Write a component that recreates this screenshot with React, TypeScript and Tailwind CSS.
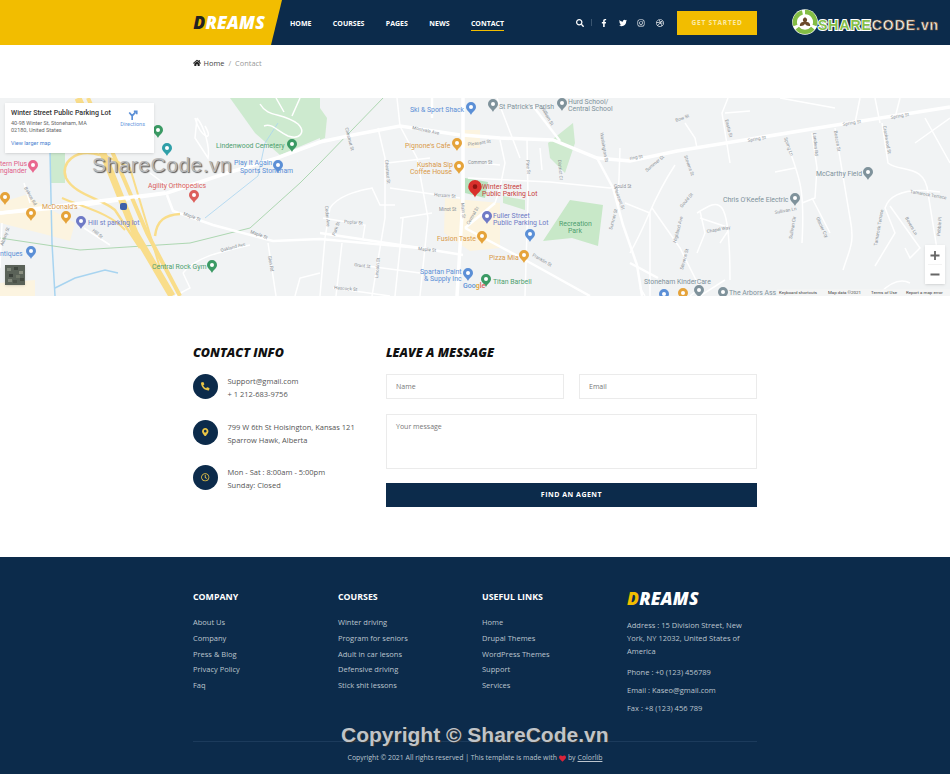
import { FaHome, FaSearch, FaFacebookF, FaTwitter, FaInstagram, FaDribbble, FaPhoneAlt, FaMapMarkerAlt, FaRegClock, FaHeart } from "react-icons/fa";

const navItems = ["HOME", "COURSES", "PAGES", "NEWS", "CONTACT"];

const footerCols = [
  { title: "COMPANY", links: ["About Us", "Company", "Press & Blog", "Privacy Policy", "Faq"] },
  { title: "COURSES", links: ["Winter driving", "Program for seniors", "Adult in car lesons", "Defensive driving", "Stick shit lessons"] },
  { title: "USEFUL LINKS", links: ["Home", "Drupal Themes", "WordPress Themes", "Support", "Services"] },
];

const contactRows = [
  { icon: <FaPhoneAlt />, lines: ["Support@gmail.com", "+ 1 212-683-9756"] },
  { icon: <FaMapMarkerAlt />, lines: ["799 W 6th St Hoisington, Kansas 121", "Sparrow Hawk, Alberta"] },
  { icon: <FaRegClock />, lines: ["Mon - Sat : 8:00am - 5:00pm", "Sunday: Closed"] },
];

const roadsWide = [
  "M0 115 L77 108 L167 95 L227 75 L277 60 L320 44 L353 37 L400 28 L460 37",
  "M463 37 L500 40 L553 42 L597 60 L630 63 L677 53 L830 28 L950 9",
  "M463 0 L463 100 L457 198",
];

const roadsMid = [
  "M167 97 L173 113 L213 127 L273 143 L320 141 L420 150 L463 157",
  "M465 130 L527 163 L590 198",
  "M597 60 L613 90 L623 127 L637 167 L642 198",
  "M533 8 L560 43",
  "M320 135 L420 150",
  "M495 105 L465 130",
  "M432 0 L432 20",
  "M630 165 L658 180",
];

const roadsThin = [
  "M197 20 C205 30 210 50 208 60 L195 40 L197 20",
  "M150 75 L170 90",
  "M24 85 L30 105 M2 125 L0 170 M84 130 L110 147",
  "M183 175 C195 160 215 155 250 147 M183 175 L190 190 L175 198",
  "M268 145 L276 198 M295 198 L300 180 L320 175",
  "M397 0 L400 28 L417 60 L428 120 L420 198",
  "M378 30 L385 60 L385 120 L372 198",
  "M387 65 L430 60 M390 90 L460 100 M336 198 L342 145",
  "M320 198 L325 140 L330 110 C340 95 365 92 372 90 L380 107 L395 107",
  "M323 120 L365 127 L363 140 M400 120 L432 115 M403 120 L400 150 L395 198",
  "M480 65 L500 67 M500 42 L505 65 L500 90 L495 105",
  "M468 80 L550 84 L610 90 L630 87",
  "M527 42 L528 100 L525 198",
  "M620 50 L618 110",
  "M360 167 L420 175 M333 190 L390 198",
  "M497 0 L520 60 M540 50 L542 72",
  "M650 198 L650 115 L625 105 M652 110 L680 150 L700 190 L690 198",
  "M630 155 C650 120 650 105 675 67",
  "M700 113 L705 135 L697 155 M700 120 L730 130 L720 145",
  "M697 115 C720 100 730 95 730 182 M725 182 L700 198",
  "M728 0 L722 15 L730 65",
  "M685 25 L695 40 L697 50 M725 15 L750 13",
  "M785 40 C800 80 805 90 802 145 M802 105 L815 100 L817 70 L812 35",
  "M812 100 L830 135 M775 74 L795 70",
  "M835 30 L850 120 C855 145 850 150 843 172",
  "M882 25 L888 65 C900 75 925 65 928 95 L940 170",
  "M940 94 C910 90 890 95 885 110 L895 135 L875 168 M890 108 L920 150 L910 160 L905 150",
  "M925 20 L950 65 M915 45 L950 20",
  "M860 0 L855 25 M875 0 L880 25 M900 0 L895 20",
  "M780 0 L835 10",
  "M640 190 L645 198 M880 195 C890 185 900 180 910 185",
  "M260 6 C268 20 282 14 298 26 C306 34 300 42 288 38 C276 32 272 25 264 28 M276 0 L284 14 M300 0 L292 18",
  "M195 20 C200 40 215 45 205 28",
];

const pins = [
  [292, 47, "#3b9a64"], [278, 68, "#5b8fd6"], [194, 98, "#dc5f5b"], [33, 68, "#e9688f"],
  [66, 119, "#e5a33a"], [31, 116, "#e5a33a"], [5, 100, "#e5a33a"], [81, 124, "#6f7ac6"],
  [31, 154, "#5b8fd6"], [212, 168, "#3b9a64"], [158, 33, "#3b9a64"], [167, 51, "#2f9fa8"],
  [471, 10, "#5b8fd6"], [493, 7, "#7f929b"], [562, 6, "#7f929b"], [457, 46, "#e5a33a"],
  [459, 69, "#e5a33a"], [487, 119, "#6f7ac6"], [482, 139, "#e5a33a"], [524, 158, "#e5a33a"],
  [468, 176, "#5b8fd6"], [486, 182, "#3b9a64"], [530, 137, "#5b8fd6"], [868, 75, "#7f929b"],
  [795, 101, "#7f929b"], [699, 193, "#7f929b"], [723, 195, "#7f929b"], [683, 196, "#e5a33a"],
  [664, 197, "#5b8fd6"],
] as const;

const mapLabels: [number, number, string, string][] = [
  [216, 50, "Lindenwood Cemetery", "#4f9f70"],
  [234, 67, "Play It Again", "#5b8fd6"],
  [240, 75, "Sports Stoneham", "#5b8fd6"],
  [148, 90, "Agility Orthopedics", "#d9605c"],
  [0, 68, "tern Plus", "#e0608a"],
  [0, 75, "nglander", "#e0608a"],
  [42, 111, "McDonald's", "#d99a4a"],
  [88, 127, "Hill st parking lot", "#6f7ac6"],
  [0, 158, "ntiques", "#5b8fd6"],
  [152, 171, "Central Rock Gym", "#4f9f70"],
  [410, 14, "Ski & Sport Shack", "#5b8fd6"],
  [499, 11, "St Patrick's Parish", "#7f929b"],
  [568, 6, "Hurd School/", "#7f929b"],
  [568, 13, "Central School", "#7f929b"],
  [405, 50, "Pignone's Cafe", "#d99a4a"],
  [417, 69, "Kushala Sip", "#d99a4a"],
  [410, 76, "Coffee House", "#d99a4a"],
  [482, 91, "Winter Street", "#c9403c"],
  [482, 98, "Public Parking Lot", "#c9403c"],
  [493, 120, "Fuller Street", "#6f7ac6"],
  [493, 127, "Public Parking Lot", "#6f7ac6"],
  [437, 143, "Fusion Taste", "#d99a4a"],
  [489, 162, "Pizza Mia", "#d99a4a"],
  [420, 176, "Spartan Paint", "#5b8fd6"],
  [424, 183, "& Supply Inc", "#5b8fd6"],
  [493, 186, "Titan Barbell", "#4f9f70"],
  [559, 128, "Recreation", "#4f9f70"],
  [568, 135, "Park", "#4f9f70"],
  [816, 78, "McCarthy Field", "#7f929b"],
  [723, 104, "Chris O'Keefe Electric", "#7f929b"],
  [644, 186, "Stoneham KinderCare", "#7f929b"],
  [729, 197, "The Arbors Ass", "#7f929b"],
];

const streetLabels: [number, number, number, string][] = [
  [183, 117, 20, "Maple St"], [250, 135, 20, "Maple St"], [221, 154, -15, "Oakland Ave"],
  [92, 133, 40, "Hill St"], [24, 90, 60, "Balnos Rd"], [3, 148, -70, "Albany St"],
  [268, 158, 80, "Glen Rd"], [412, 31, 12, "Montvale Ave"], [418, 152, 6, "Maple St"],
  [468, 48, -8, "Pleasant St"], [468, 66, 0, "Common St"], [434, 98, 5, "Hersam St"],
  [439, 113, 0, "Minot St"], [461, 105, 85, "Main St"], [469, 127, -60, "Central St"],
  [344, 125, 5, "Poplar St"], [532, 158, 30, "Franklin St"], [541, 10, 60, "William St"],
  [614, 90, 70, "Pleasant St"], [614, 90, 0, "Gould St"], [748, 44, -10, "Spring St"],
  [843, 28, -10, "Spring St"], [891, 21, -10, "Spring St"], [630, 62, -10, "ring St"],
  [647, 74, -40, "Summer St"], [684, 58, 70, "Stevens St"], [682, 110, -50, "Gould St"],
  [676, 145, -75, "Highland Ave"], [707, 135, -10, "Chapel Way"], [683, 172, -75, "Stevens St"],
  [775, 116, -10, "Sullivan Ln"], [792, 141, -80, "Sullivan Cir"], [816, 120, 65, "Glacier Cty"],
  [784, 40, 70, "Spring Ln"], [813, 35, 85, "Landers Rd"], [834, 33, 80, "Beacon St"],
  [883, 28, 80, "Crackwood St"], [910, 95, 10, "Tamarock Terrace"], [877, 148, -80, "Tamarock Terrace"],
  [905, 120, 60, "Bovers Ln"], [940, 138, -85, "Pebble Pl"], [725, 22, 75, "Eastia St"],
  [676, 24, -20, "Bow St"], [345, 30, 75, "Chestnut St"], [385, 62, 85, "Chestnut St"],
  [335, 138, -70, "Park St"], [378, 180, -85, "Lincoln St"], [354, 168, 8, "Grant St"],
  [334, 191, 5, "Hascock St"], [325, 108, 85, "Cedar Ave"], [600, 35, 80, "Washington St"],
  [526, 62, 85, "Pine St"], [558, 62, 85, "District Ct"], [612, 132, -75, "Sumner St"],
];

const satelliteSpots = [
  [2, 3, "#7d8577"], [9, 2, "#3f463d"], [14, 6, "#8a8f80"], [4, 9, "#3a403a"], [11, 10, "#6f7668"],
  [15, 13, "#43493f"], [3, 14, "#80867a"], [8, 15, "#4b5148"],
] as const;

function Pin({ x, y, color }: { x: number; y: number; color: string }) {
  return (
    <g transform={`translate(${x} ${y})`}>
      <path d="M0 7 C-1 4 -5 2.5 -5 -1 A5 5 0 1 1 5 -1 C5 2.5 1 4 0 7 Z" fill={color} />
      <circle cx="0" cy="-1" r="2" fill="#fff" />
    </g>
  );
}

function MapDrawing() {
  return (
    <svg viewBox="0 0 950 198" className="block h-[198px] w-full" style={{ fontFamily: "Roboto, sans-serif" }}>
      <rect width="950" height="198" fill="#f1f3f4" />
      {/* parks and commercial blocks */}
      <path d="M230 0 L320 0 L320 40 L280 57 L255 35 Z" fill="#cdeacf" />
      <path d="M50 52 L65 52 L65 85 L50 85 Z" fill="#cdeacf" />
      <path d="M570 102 L603 107 L598 148 L572 140 L543 143 Z" fill="#c8e8c8" />
      <path d="M548 45 L573 25 L575 45 L565 75 L550 60 Z" fill="#cfeacf" />
      <path d="M503 98 L525 102 L525 112 L503 105 Z" fill="#cfeacf" />
      <path d="M465 80 L488 84 L485 100 L465 95 Z" fill="#b9e2bf" />
      <path d="M320 10 L327 20 L325 40 L320 42 Z" fill="#cfeacf" />
      <path d="M0 105 L25 97 L75 125 L70 143 L40 135 L20 130 L0 125 Z" fill="#fcf4e0" />
      <path d="M445 100 L500 105 L500 150 L470 153 L444 135 Z" fill="#fcf4e0" />
      <path d="M462 32 L480 32 L480 50 L462 50 Z" fill="#fcf4e0" />
      <path d="M0 185 L35 182 L35 198 L0 198 Z" fill="#fcf4e0" />
      {/* water and park lines */}
      <path d="M50 55 L52 145 L55 198 M55 190 L75 180 L105 172 L118 175" fill="none" stroke="#a8d4f0" strokeWidth="1.5" />
      <path d="M205 120 L258 78 L265 45 L278 25" fill="none" stroke="#a8d4f0" strokeWidth="0.8" />
      <path d="M0 140 L80 152 L190 145 L250 130 L300 85 L320 65 L383 0" fill="none" stroke="#9ccf9f" strokeWidth="0.8" />
      {/* roads */}
      {roadsThin.map((d) => (
        <path key={d} d={d} fill="none" stroke="#fff" strokeWidth="1.5" />
      ))}
      {roadsMid.map((d) => (
        <path key={d} d={d} fill="none" stroke="#fff" strokeWidth="2.5" />
      ))}
      {roadsWide.map((d) => (
        <path key={d} d={d} fill="none" stroke="#fff" strokeWidth="3.5" />
      ))}
      {/* interstate */}
      <path d="M78 0 L105 60 L135 135 L172 198" fill="none" stroke="#f9dd8a" strokeWidth="7" />
      <path d="M88 0 L115 60 L147 135 L180 198" fill="none" stroke="#f9dd8a" strokeWidth="4" />
      <path d="M100 55 L130 70 L160 170" fill="none" stroke="#f9dd8a" strokeWidth="2" />
      <path d="M100 57 C75 50 60 65 66 80 C75 97 100 100 115 112 L140 150" fill="none" stroke="#f9dd8a" strokeWidth="2.5" />
      <path d="M62 100 C85 110 110 115 125 132" fill="none" stroke="#f9dd8a" strokeWidth="2" />
      <path d="M155 138 C157 122 165 117 180 116" fill="none" stroke="#f9dd8a" strokeWidth="2.5" />
      <path d="M0 115 L165 95" fill="none" stroke="#fff" strokeWidth="3.5" />
      <rect x="120" y="105" width="7" height="7" rx="2" fill="#3f5fa8" />
      {streetLabels.map(([x, y, r, t], i) => (
        <text key={i} x={x} y={y} fontSize="4.6" fill="#8a9096" transform={`rotate(${r} ${x} ${y})`}>
          {t}
        </text>
      ))}
      {mapLabels.map(([x, y, t, c]) => (
        <text key={t + x} x={x} y={y} fontSize="6.9" fill={c}>
          {t}
        </text>
      ))}
      {pins.map(([x, y, c]) => (
        <Pin key={`${x}-${y}`} x={x} y={y} color={c} />
      ))}
      <g transform="translate(475 90) scale(1.35)">
        <path d="M0 7 C-1 4 -5 2.5 -5 -1 A5 5 0 1 1 5 -1 C5 2.5 1 4 0 7 Z" fill="#d9302c" />
        <circle cx="0" cy="-1" r="1.7" fill="#8c1512" />
      </g>
      <text x="463" y="190" fontSize="7" fontWeight="500" fill="#5b8fd6">
        Goo<tspan fill="#e0a030">g</tspan><tspan fill="#d9605c">le</tspan>
      </text>
      <rect x="777" y="191" width="173" height="7" fill="#f5f5f5" fillOpacity="0.8" />
      <text x="779" y="196" fontSize="4.4" fill="#444">Keyboard shortcuts</text>
      <text x="828" y="196" fontSize="4.4" fill="#444">Map data ©2021</text>
      <text x="871" y="196" fontSize="4.4" fill="#444">Terms of Use</text>
      <text x="906" y="196" fontSize="4.4" fill="#444">Report a map error</text>
    </svg>
  );
}

function Logo({ first }: { first: string }) {
  return (
    <span className="text-[17.5px] leading-none font-extrabold tracking-[0.2px] italic text-white">
      <span className={first}>D</span>REAMS
    </span>
  );
}

export default function App() {
  return (
    <div className="relative w-full bg-white font-['Open_Sans',sans-serif] text-[#666]">
      {/* Header */}
      <header className="flex h-[45px] items-center bg-[#0c2b4b]">
        <div className="flex h-full w-[282px] shrink-0 items-center justify-end bg-[#f2bd00] pr-[17px] [clip-path:polygon(0_0,100%_0,271px_100%,0_100%)]">
          <Logo first="text-[#222]" />
        </div>
        <nav className="ml-[8px] flex gap-[21.4px] text-[7px] font-bold text-white">
          {navItems.map((item) => (
            <a key={item} className={item === "CONTACT" ? "border-b border-[#f2bd00] pb-[1px] pt-[5px]" : "border-b border-transparent pb-[1px] pt-[5px]"}>
              {item}
            </a>
          ))}
        </nav>
        <div className="ml-[72px] flex items-center text-[8px] text-white">
          <FaSearch />
          <span className="ml-[7px] h-[7px] w-px bg-[#3a5570]" />
          <div className="ml-[8px] flex items-center gap-[10.5px]">
            <FaFacebookF />
            <FaTwitter />
            <FaInstagram />
            <FaDribbble />
          </div>
        </div>
        <a className="ml-[13.5px] flex h-[24px] w-[80px] shrink-0 items-center justify-center bg-[#f2bd00] text-[6.5px] font-bold tracking-[0.8px] text-[#fbeaa8]">
          GET STARTED
        </a>
        <div className="ml-[35px] flex shrink-0 items-center pb-[1px]">
          <svg viewBox="0 0 30 30" className="h-[26px] w-[26px]">
            <circle cx="15" cy="15" r="14.8" fill="#fff" />
            <path d="M15 3.5 A11.5 11.5 0 0 1 26 19" fill="none" stroke="#84bd45" strokeWidth="5" />
            <path d="M24 22 A11.5 11.5 0 0 1 6 22" fill="none" stroke="#84bd45" strokeWidth="5" />
            <path d="M4 19 A11.5 11.5 0 0 1 12 3.8" fill="none" stroke="#84bd45" strokeWidth="5" />
            <path d="M15 9.5 C18 11 18 13 16.5 15 C19 14.5 21 16 21 19.5 C18.5 20 16 19 15 17 C14 19 11.5 20 9 19.5 C9 16 11 14.5 13.5 15 C12 13 12 11 15 9.5 Z" fill="#6b4a2b" />
          </svg>
          <span className="mt-[6px] font-['Liberation_Sans',sans-serif] text-[14px] leading-none font-bold tracking-[0.95px] text-[#86bf4a] [-webkit-text-stroke:2px_#fff] [paint-order:stroke_fill]">
            SHARE
          </span>
          <span className="mt-[6px] font-['Liberation_Sans',sans-serif] text-[14px] leading-none font-bold tracking-[0.95px] text-white [-webkit-text-stroke:0.7px_#7a5a3a]">
            CODE.vn
          </span>
        </div>
      </header>

      {/* Breadcrumb */}
      <div className="mx-auto flex h-[53px] w-[564px] items-start pt-[13px] text-[7.4px] leading-[10px]">
        <FaHome className="mr-[2.5px] mt-[1px] text-[8px] text-[#222]" />
        <span className="text-[#444]">Home</span>
        <span className="mx-[4px] text-[#999]">/</span>
        <span className="text-[#999]">Contact</span>
      </div>

      {/* Map */}
      <section className="relative h-[198px] overflow-hidden">
        <MapDrawing />
        <div className="absolute left-[5px] top-[5px] flex h-[50px] w-[149px] justify-between bg-white pl-[6px] pr-[9px] pt-[5px] font-['Roboto',sans-serif] shadow-sm">
          <div>
            <p className="text-[7px] leading-[10px] font-medium text-[#333]">Winter Street Public Parking Lot</p>
            <p className="mt-[2px] w-[90px] text-[5.5px] leading-[7px] text-[#666]">40-98 Winter St, Stoneham, MA 02180, United States</p>
            <p className="mt-[6px] text-[5.5px] leading-[7px] text-[#4a80d0]">View larger map</p>
          </div>
          <div className="flex flex-col items-center pt-[2px] text-[5.5px] leading-[7px] text-[#6a9ae0]">
            <svg viewBox="0 0 12 12" className="h-[10px] w-[10px]">
              <path d="M5 12 V7 L1.5 3 M5 7 L9 2.5 M7 1.5 H10.5 V5" fill="none" stroke="#5b8fd6" strokeWidth="2" />
            </svg>
            <span className="mt-[1px]">Directions</span>
          </div>
        </div>
        <svg viewBox="0 0 20 20" className="absolute bottom-[11px] left-[5px] h-[20px] w-[20px] shadow">
          <rect width="20" height="20" fill="#5a6258" />
          {satelliteSpots.map(([x, y, c]) => (
            <rect key={`${x}-${y}`} x={x} y={y} width="4" height="3" fill={c} />
          ))}
        </svg>
        <div className="absolute bottom-[12px] right-[5px] flex h-[39px] w-[20px] flex-col items-center justify-center bg-white text-[#555] shadow-sm">
          <svg viewBox="0 0 20 39" className="h-[39px] w-[20px]">
            <path d="M10 6 V15 M5.5 10.5 H14.5 M5.5 29.5 H14.5" stroke="#666" strokeWidth="1.8" />
            <path d="M3 19.5 H17" stroke="#e6e6e6" strokeWidth="0.5" />
          </svg>
        </div>
      </section>

      {/* Contact */}
      <section className="mx-auto flex h-[261px] w-[564px] pt-[49px]">
        <div className="w-[193px] shrink-0">
          <h2 className="text-[12.5px] leading-[16px] font-extrabold text-[#111] italic">CONTACT INFO</h2>
          <div className="mt-[13px] flex flex-col gap-[18.5px]">
            {contactRows.map((row) => (
              <div key={row.lines[0]} className="flex items-start gap-[9.5px]">
                <span className="flex h-[25px] w-[25px] items-center justify-center rounded-full bg-[#0c2b4b] text-[8.5px] text-[#eac545]">
                  {row.icon}
                </span>
                <p className="mt-[1px] text-[7.5px] leading-[13px] text-[#555]">
                  {row.lines[0]}
                  <br />
                  {row.lines[1]}
                </p>
              </div>
            ))}
          </div>
        </div>
        <div className="flex-1">
          <h2 className="text-[12.5px] leading-[16px] font-extrabold text-[#111] italic">LEAVE A MESSAGE</h2>
          <form className="mt-[13px] flex flex-col">
            <div className="flex gap-[15px]">
              <input placeholder="Name" className="h-[25px] w-[178px] border border-[#ebebeb] px-[9px] text-[7px] placeholder:text-[#777]" />
              <input placeholder="Email" className="h-[25px] w-[178px] border border-[#ebebeb] px-[9px] text-[7px] placeholder:text-[#777]" />
            </div>
            <textarea placeholder="Your message" className="mt-[15px] h-[55px] resize-none border border-[#ebebeb] px-[9px] py-[7px] text-[7px] placeholder:text-[#777]" />
            <button type="button" className="mt-[14px] h-[24px] bg-[#0c2b4b] pt-[1px] text-[7px] font-bold tracking-[0.5px] text-white">
              FIND AN AGENT
            </button>
          </form>
        </div>
      </section>

      {/* Footer */}
      <footer className="h-[217px] bg-[#0c2b4b] text-[#bcc5ce]">
        <div className="mx-auto w-[564px] pt-[33px]">
          <div className="grid h-[152px] grid-cols-[145px_144px_145px_1fr] border-b border-[#1c3b5c]">
            {footerCols.map((col) => (
              <div key={col.title}>
                <h3 className="text-[8.8px] leading-[14px] font-bold text-white">{col.title}</h3>
                <ul className="mt-[11px] flex flex-col text-[7.5px] leading-[15.8px]">
                  {col.links.map((link) => (
                    <li key={link}>{link}</li>
                  ))}
                </ul>
              </div>
            ))}
            <div className="-mt-[3px]">
              <Logo first="text-[#f2bd00]" />
              <p className="mt-[8px] text-[7.5px] leading-[13px]">Address : 15 Division Street, New York, NY 12032, United States of America</p>
              <p className="mt-[8px] text-[7.5px] leading-[13px]">Phone : +0 (123) 456789</p>
              <p className="mt-[5px] text-[7.5px] leading-[13px]">Email : Kaseo@gmail.com</p>
              <p className="mt-[4.5px] text-[7.5px] leading-[13px]">Fax : +8 (123) 456 789</p>
            </div>
          </div>
          <p className="mt-[11px] flex items-center justify-center text-[6.9px] leading-[10px]">
            Copyright © 2021 All rights reserved | This template is made with
            <FaHeart className="mx-[2px] text-[7px] text-[#d9233a]" />
            by <span className="ml-[2px] underline">Colorlib</span>
          </p>
        </div>
      </footer>

      {/* Watermarks over the page */}
      <div className="pointer-events-none absolute left-[92px] top-[153px] font-['Liberation_Sans',sans-serif] text-[21px] leading-[24px] tracking-[0.5px] text-[#b9b9b9] [text-shadow:1px_1px_1px_#555]">
        ShareCode.vn
      </div>
      <div className="pointer-events-none absolute left-[341px] top-[723px] font-['Liberation_Sans',sans-serif] text-[21px] leading-[24px] font-bold text-[#c0c4c8] [text-shadow:1px_1px_1px_#333]">
        Copyright © ShareCode.vn
      </div>
    </div>
  );
}
